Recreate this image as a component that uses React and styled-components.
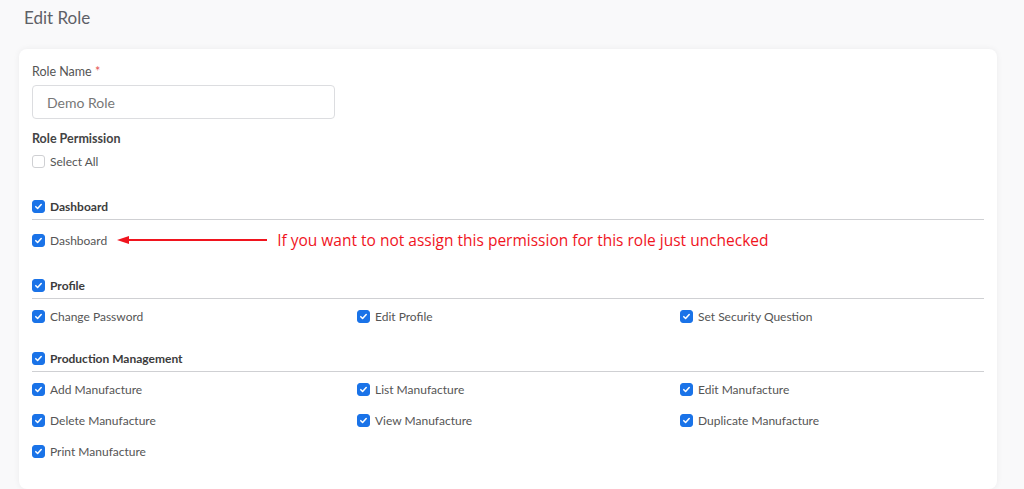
import React from "react";
import styled, { createGlobalStyle } from "styled-components";

const Global = createGlobalStyle`
  body { margin: 0; background: #f9f9fa; font-family: Lato, "Open Sans", sans-serif; }
`;
const Page = styled.div`padding: 7px 19px 0 19px; width: 978px;`;
const Title = styled.h1`margin: 0 0 20px 5px; font-size: 17px; font-weight: 400; color: #5e6066; line-height: 22px;`;
const Card = styled.div`background: #fff; border-radius: 8px; box-shadow: 0 0 6px rgba(0,0,0,0.06); padding: 15px 13px 12px; height: 440px; box-sizing: border-box;`;
const Label = styled.div`font-size: 12.5px; color: #555; line-height: 16px;`;
const Star = styled.span`color: #e55353;`;
const Input = styled.div`margin-top: 5px; width: 303px; height: 34px; box-sizing: border-box; border: 1px solid #dcdde0; border-radius: 4px; padding: 0 14px; display: flex; align-items: center; font-size: 14px; color: #777;`;
const Bold = styled.div`font-size: 12.5px; font-weight: 700; color: #444; margin-top: 12px; line-height: 16px;`;
const Row = styled.label`display: flex; align-items: center; gap: 5px; font-size: 12px; color: ${p => p.$bold ? "#3c3c3c" : "#555"}; font-weight: ${p => p.$bold ? 700 : 400}; height: 16px;`;
const Box = styled.span`width: 13px; height: 13px; box-sizing: border-box; border-radius: 3px; display: inline-flex; align-items: center; justify-content: center;
  background: ${p => p.$on ? "#1a73e8" : "#fff"}; border: 1px solid ${p => p.$on ? "#1a73e8" : "#cfd0d3"};`;
const Section = styled.div`margin-top: ${p => p.$mt}px;`;
const Head = styled.div`padding-bottom: 5px; border-bottom: 1px solid #cfd0d3;`;
const Grid = styled.div`display: grid; grid-template-columns: 325px 323px 1fr; row-gap: 15px; margin-top: 9px;`;
const Note = styled.div`display: flex; align-items: center; gap: 10px;`;
const NoteText = styled.span`color: #f0141e; font-family: "Open Sans", sans-serif; font-size: 15.5px;`;

const Check = ({ on = true, children, bold }) => (
  <Row $bold={bold}>
    <Box $on={on}>
      {on && <svg width="9" height="9" viewBox="0 0 10 10"><path d="M2 5.2l2 2 4-4.4" stroke="#fff" strokeWidth="1.7" fill="none" strokeLinecap="round" strokeLinejoin="round"/></svg>}
    </Box>
    {children}
  </Row>
);

export default function App() {
  return (
    <Page>
      <Global />
      <Title>Edit Role</Title>
      <Card>
        <Label>Role Name <Star>*</Star></Label>
        <Input>Demo Role</Input>
        <Bold>Role Permission</Bold>
        <Section $mt={6}><Check on={false}>Select All</Check></Section>
        <Section $mt={29}>
          <Head><Check bold>Dashboard</Check></Head>
          <Grid>
            <Note style={{ gridColumn: "1 / 4" }}>
              <Check>Dashboard</Check>
              <svg width="150" height="10" viewBox="0 0 150 10"><path d="M0 5l12-4v3h138v2H12v3z" fill="#f0141e"/></svg>
              <NoteText>If you want to not assign this permission for this role just unchecked</NoteText>
            </Note>
          </Grid>
        </Section>
        <Section $mt={26}>
          <Head><Check bold>Profile</Check></Head>
          <Grid>
            <Check>Change Password</Check>
            <Check>Edit Profile</Check>
            <Check>Set Security Question</Check>
          </Grid>
        </Section>
        <Section $mt={26}>
          <Head><Check bold>Production Management</Check></Head>
          <Grid>
            <Check>Add Manufacture</Check>
            <Check>List Manufacture</Check>
            <Check>Edit Manufacture</Check>
            <Check>Delete Manufacture</Check>
            <Check>View Manufacture</Check>
            <Check>Duplicate Manufacture</Check>
            <Check>Print Manufacture</Check>
          </Grid>
        </Section>
      </Card>
    </Page>
  );
}
